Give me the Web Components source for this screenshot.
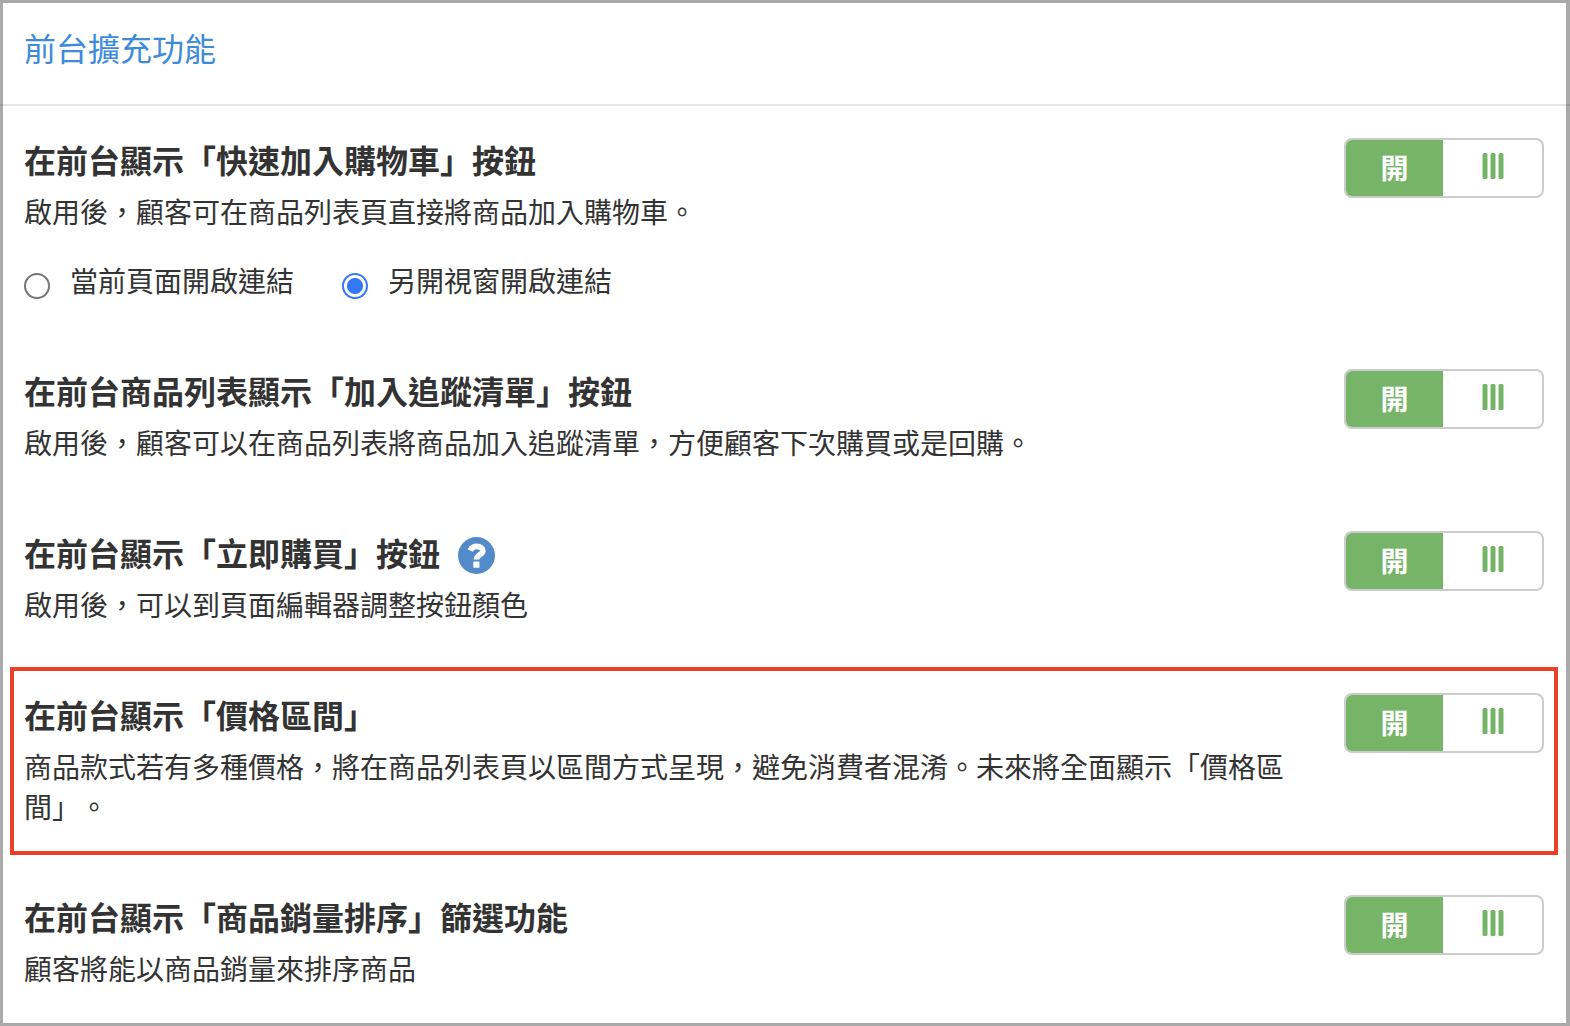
<!DOCTYPE html>
<html lang="zh-Hant">
<head>
<meta charset="utf-8">
<meta name="viewport" content="width=device-width, initial-scale=1">
<title>前台擴充功能</title>
<style>
  body {
    margin: 0;
    background: #fff;
    color: #333;
    font-family: "Noto Sans CJK TC", sans-serif;
    font-size: 28px;
    line-height: 40px;
    text-spacing-trim: space-all;
  }
</style>
</head>
<body>
<settings-panel>
  <span slot="title">前台擴充功能</span>

  <setting-row label="在前台顯示「快速加入購物車」按鈕">
    啟用後，顧客可在商品列表頁直接將商品加入購物車。
    <link-target-choice slot="options"></link-target-choice>
  </setting-row>

  <setting-row label="在前台商品列表顯示「加入追蹤清單」按鈕">啟用後，顧客可以在商品列表將商品加入追蹤清單，方便顧客下次購買或是回購。</setting-row>

  <setting-row label="在前台顯示「立即購買」按鈕">
    <help-button slot="help"></help-button>
    啟用後，可以到頁面編輯器調整按鈕顏色
  </setting-row>

  <setting-row highlighted label="在前台顯示「價格區間」">商品款式若有多種價格，將在商品列表頁以區間方式呈現，避免消費者混淆。未來將全面顯示「價格區間」。</setting-row>

  <setting-row label="在前台顯示「商品銷量排序」篩選功能">顧客將能以商品銷量來排序商品</setting-row>
</settings-panel>

<script>
  class BaseElement extends HTMLElement {
    constructor() {
      super();
      this.attachShadow({ mode: 'open' }).innerHTML = this.constructor.markup;
    }
  }

  class SettingsPanel extends BaseElement {
    static markup = `
      <style>
        :host {
          display: block;
          box-sizing: border-box;
          min-height: 100vh;
          border: 3px solid #aaa;
          border-right-width: 4px;
        }
        header {
          margin: 0 -4px 0 -3px;
          padding: 20px 24px 33px;
          border-bottom: 2px solid rgba(0, 0, 0, .1);
        }
        h1 {
          margin: 0;
          font-size: 32px;
          line-height: 48px;
          font-weight: 400;
          color: #3d8bd9;
        }
        main {
          display: flex;
          flex-direction: column;
          gap: 14px;
          padding: 6px 8px 0 7px;
        }
      </style>
      <header><h1><slot name="title"></slot></h1></header>
      <main><slot></slot></main>`;
  }

  class SettingRow extends BaseElement {
    static markup = `
      <style>
        :host {
          display: flex;
          align-items: flex-start;
          gap: 40px;
          padding: 22px 10px 25px;
          border: 4px solid transparent;
        }
        :host([highlighted]) { border-color: #ea4028; }
        .text { flex: 1; min-width: 0; }
        .heading { display: flex; align-items: center; gap: 18px; margin-bottom: 10px; }
        h2 { margin: 0; font-size: 32px; line-height: 43px; font-weight: 700; }
        p { margin: 0; }
      </style>
      <div class="text">
        <div class="heading"><h2></h2><slot name="help"></slot></div>
        <p><slot></slot></p>
        <slot name="options"></slot>
      </div>
      <toggle-switch></toggle-switch>`;

    connectedCallback() {
      const label = this.getAttribute('label');
      this.shadowRoot.querySelector('h2').textContent = label;
      this.shadowRoot.querySelector('toggle-switch').setAttribute('label', label);
    }
  }

  class ToggleSwitch extends BaseElement {
    static markup = `
      <style>
        :host { display: block; flex: none; }
        button {
          display: flex;
          box-sizing: border-box;
          width: 200px;
          height: 60px;
          padding: 0;
          border: 2px solid #ccc;
          border-radius: 8px;
          overflow: hidden;
          background: #fff;
          color: #fff;
          font: inherit;
          font-weight: 700;
          cursor: pointer;
        }
        span {
          display: flex;
          box-sizing: border-box;
          align-items: center;
          justify-content: center;
          height: 56px;
        }
        .on { width: 97px; padding-bottom: 2px; background: #76b567; }
        .handle { flex: 1; padding-bottom: 4px; }
        button[aria-checked="false"] .on { background: #999; }
      </style>
      <button type="button" role="switch" aria-checked="true">
        <span class="on">開</span>
        <span class="handle">
          <svg width="22" height="26" viewBox="0 0 22 26" fill="#76b567" aria-hidden="true">
            <rect x="0.5" width="5" height="26" rx="1.5"/>
            <rect x="8.5" width="5" height="26" rx="1.5"/>
            <rect x="16.5" width="5" height="26" rx="1.5"/>
          </svg>
        </span>
      </button>`;

    connectedCallback() {
      const button = this.shadowRoot.querySelector('button');
      button.setAttribute('aria-label', this.getAttribute('label') || '');
      button.onclick = () =>
        button.setAttribute('aria-checked', button.getAttribute('aria-checked') !== 'true');
    }
  }

  class HelpButton extends BaseElement {
    static markup = `
      <style>
        :host { display: block; margin-top: 5px; }
        button {
          display: block;
          padding: 0;
          border: 0;
          background: none;
          cursor: pointer;
        }
        svg { display: block; }
      </style>
      <button type="button" aria-label="說明">
        <svg width="37" height="37" viewBox="0 0 37 37" aria-hidden="true">
          <circle cx="18.5" cy="18.5" r="18.5" fill="#538bca"/>
          <path d="M12.2 13.4C13.5 10.8 15.6 9.4 18.8 9.4C22.4 9.4 24.8 11.3 24.8 13.9C24.8 17.8 18.4 17.4 18.4 22.6" fill="none" stroke="#fff" stroke-width="5.6"/>
          <rect x="15.3" y="24.4" width="6.2" height="6.3" rx=".6" fill="#fff"/>
        </svg>
      </button>`;
  }

  class LinkTargetChoice extends BaseElement {
    static markup = `
      <style>
        :host { display: block; margin-top: 29px; }
        fieldset {
          display: flex;
          flex-wrap: wrap;
          gap: 0 48px;
          margin: 0;
          padding: 0;
          border: 0;
        }
        label { display: flex; align-items: center; gap: 20px; }
        input {
          appearance: none;
          box-sizing: border-box;
          width: 26px;
          height: 26px;
          margin: 12px 0 0;
          border: 2px solid #767676;
          border-radius: 50%;
          background: #fff;
        }
        input:checked {
          border-color: #3478f6;
          background: radial-gradient(circle, #3478f6 7.5px, #fff 8.5px);
        }
      </style>
      <fieldset aria-label="連結開啟方式">
        <label for="same"><input type="radio" id="same" name="target">當前頁面開啟連結</label>
        <label for="new"><input type="radio" id="new" name="target" checked>另開視窗開啟連結</label>
      </fieldset>`;
  }

  customElements.define('toggle-switch', ToggleSwitch);
  customElements.define('help-button', HelpButton);
  customElements.define('link-target-choice', LinkTargetChoice);
  customElements.define('setting-row', SettingRow);
  customElements.define('settings-panel', SettingsPanel);
</script>
</body>
</html>
